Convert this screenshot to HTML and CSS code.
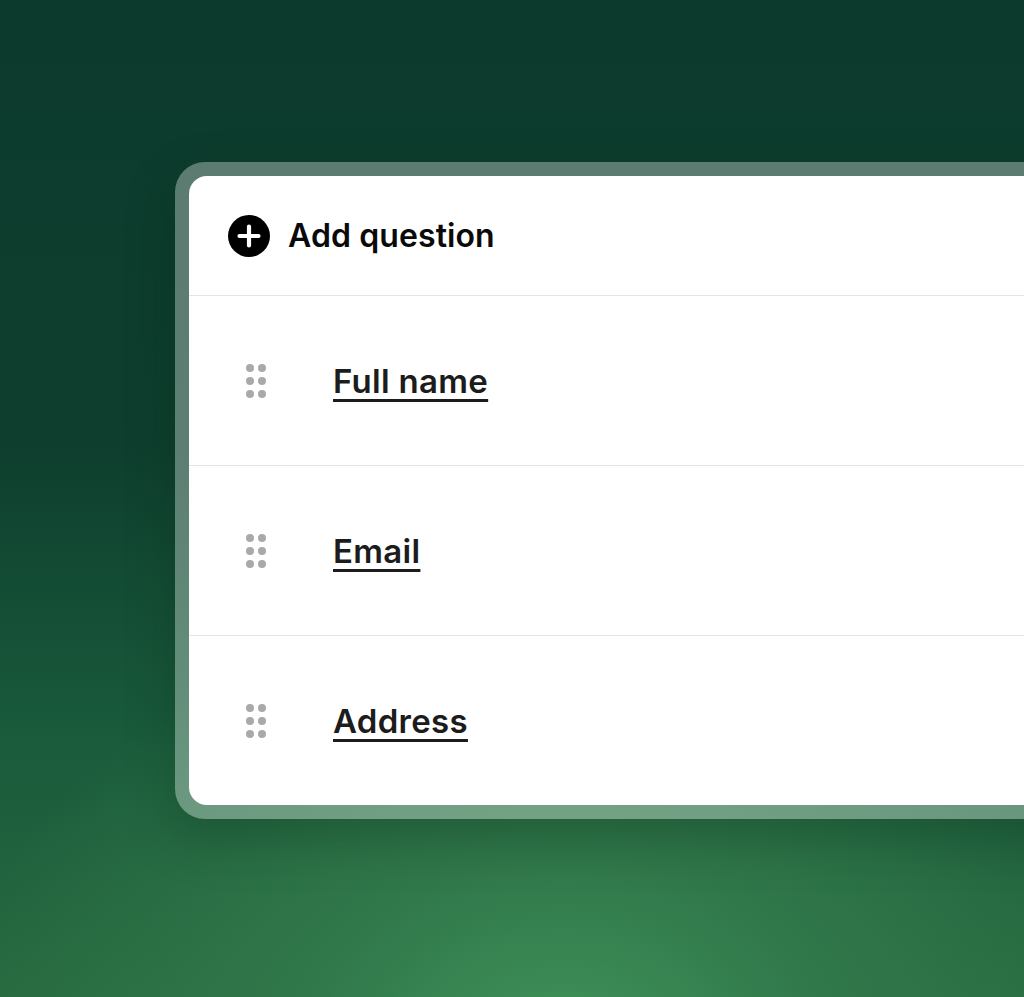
FILE: index.html
```html
<!DOCTYPE html>
<html>
<head>
<meta charset="utf-8">
<link rel="stylesheet" href="styles.css">
</head>
<body>
<div class="stage">
  <div class="frame">
    <div class="card">
      <div class="header">
        <svg class="plus" width="42" height="42" viewBox="0 0 42 42">
          <circle cx="21" cy="21" r="21" fill="#000"/>
          <path d="M21 11.5v19M11.5 21h19" stroke="#fff" stroke-width="4.2" stroke-linecap="round"/>
        </svg>
        <span class="title">Add question</span>
      </div>
      <div class="row">
        <span class="handle"><i></i><i></i><i></i><i></i><i></i><i></i></span>
        <span class="label">Full name</span>
      </div>
      <div class="row">
        <span class="handle"><i></i><i></i><i></i><i></i><i></i><i></i></span>
        <span class="label">Email</span>
      </div>
      <div class="row last">
        <span class="handle"><i></i><i></i><i></i><i></i><i></i><i></i></span>
        <span class="label">Address</span>
      </div>
    </div>
  </div>
</div>
</body>
</html>
```
FILE: styles.css
```css
html, body {
  margin: 0;
  padding: 0;
  height: 100%;
  overflow: hidden;
}
body {
  font-family: Inter, "Noto Sans", sans-serif;
  background:
    radial-gradient(ellipse 75% 55% at 55% 105%, #40935a 0%, #30774a 35%, rgba(30,90,55,0) 80%),
    linear-gradient(180deg, #0c3b2d 0%, #0e3f2e 45%, #1a5c3c 75%, #27693f 100%);
  background-color: #0c3b2d;
}
.stage {
  padding: 162px 0 0 175px;
}
.frame {
  width: 1000px;
  padding: 14px;
  border-radius: 30px;
  background: rgba(255, 255, 255, 0.33);
  box-shadow: 0 20px 50px rgba(0, 30, 15, 0.25);
}
.card {
  background: #fff;
  border-radius: 18px;
  overflow: hidden;
}
.header {
  height: 119px;
  display: flex;
  align-items: center;
  padding-left: 39px;
  gap: 18px;
  border-bottom: 1px solid #e2e5e8;
}
.plus {
  display: block;
  flex: none;
}
.title {
  font-size: 32px;
  font-weight: 600;
  color: #0a0a0a;
  letter-spacing: 0.1px;
}
.row {
  height: 169px;
  display: flex;
  align-items: center;
  padding-left: 57px;
  border-bottom: 1px solid #e2e5e8;
}
.row.last {
  border-bottom: none;
}
.handle {
  display: grid;
  grid-template-columns: 8px 8px;
  grid-auto-rows: 8px;
  column-gap: 4px;
  row-gap: 5px;
  margin-right: 67px;
}
.handle i {
  width: 8px;
  height: 8px;
  border-radius: 50%;
  background: #a9a9a9;
}
.label {
  font-size: 33px;
  font-weight: 600;
  color: #1c1c1c;
  letter-spacing: 0.3px;
  text-decoration: underline;
  text-decoration-thickness: 2.5px;
  text-underline-offset: 6px;
}
```
